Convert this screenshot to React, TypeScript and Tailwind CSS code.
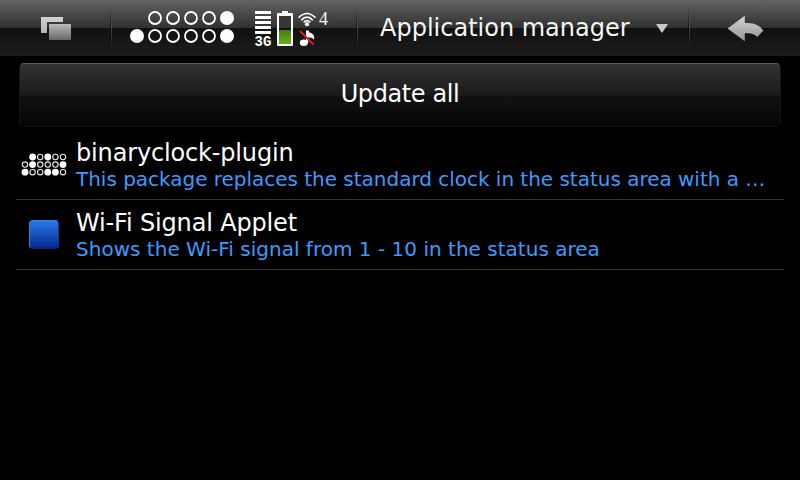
import React from "react";

function TaskSwitcher() {
  return (
    <svg className="block" width="110" height="56" viewBox="0 0 110 56">
      <defs>
        <linearGradient id="back" x1="0" y1="0" x2="0" y2="1">
          <stop offset="0" stopColor="#d2d2d2" />
          <stop offset="1" stopColor="#b4b4b4" />
        </linearGradient>
        <linearGradient id="front" x1="0" y1="0" x2="0" y2="1">
          <stop offset="0" stopColor="#bcbcbc" />
          <stop offset="1" stopColor="#666666" />
        </linearGradient>
      </defs>
      <path d="M41 17H63V22H47V33H41Z" fill="url(#back)" />
      <rect x="49" y="24" width="22" height="16" rx="0.5" fill="url(#front)" />
    </svg>
  );
}

function Bit({ x, y, on }: { x: number; y: number; on: boolean }) {
  return <circle cx={x} cy={y} r={on ? 7 : 6} fill={on ? "#fcfffc" : "none"} stroke="#fcfffc" strokeWidth={on ? 0 : 1.8} />;
}

function BinaryClock() {
  return (
    <svg className="block" width="118" height="56" viewBox="127 0 118 56">
      {[155, 173, 191, 209, 227].map((x, i) => (
        <Bit key={x} x={x} y={18} on={i === 4} />
      ))}
      {[137, 155, 173, 191, 209, 227].map((x, i) => (
        <Bit key={x} x={x} y={36} on={i === 0 || i === 5} />
      ))}
    </svg>
  );
}

function StatusIcons() {
  return (
    <svg className="block" width="90" height="56" viewBox="245 0 90 56">
      <defs>
        <linearGradient id="charge" x1="0" y1="0" x2="0" y2="1">
          <stop offset="0" stopColor="#437c14" />
          <stop offset="1" stopColor="#68b020" />
        </linearGradient>
      </defs>
      {[11, 16, 21, 26, 31].map((y) => (
        <rect key={y} x="255" y={y} width="16" height="3" fill="#fcfffc" />
      ))}
      <text y="46" fill="#fcfffc" fontFamily="Liberation Mono, monospace" fontWeight="700" fontSize="14">
        <tspan x="254.5">3</tspan>
        <tspan x="263">G</tspan>
      </text>
      <path d="M282 13V11H288V13H292Q293 13 293 14V45Q293 46 292 46H278Q277 46 277 45V14Q277 13 278 13Z" fill="#fcfffc" />
      <rect x="279" y="16" width="12" height="12" fill="#363636" />
      <rect x="279" y="28" width="12" height="2" fill="#111" />
      <rect x="279" y="30" width="12" height="14" fill="url(#charge)" />
      <g fill="none" stroke="#fcfffc" strokeWidth="1.6">
        <path d="M298.5 17.8Q307 9.2 315.5 17.8" />
        <path d="M301.2 20.2Q307 14 312.8 20.2" />
        <path d="M303.7 22.4Q307 18.9 310.3 22.4" />
      </g>
      <circle cx="307" cy="24.2" r="2.1" fill="#fcfffc" />
      <text x="319" y="25" fill="#fcfffc" fontFamily="Liberation Serif, serif" fontSize="18">4</text>
      <ellipse cx="303.8" cy="42.8" rx="4" ry="3.2" fill="#fcfffc" />
      <path d="M306 30.5H308.5Q309 33 311.5 33.2Q314.8 34.5 314 39.5Q312 37.2 308.2 37.2V43H306Z" fill="#fcfffc" />
      <path d="M300 31L313.5 44.5" stroke="#df2025" strokeWidth="1.8" />
    </svg>
  );
}

function BackArrow() {
  return (
    <svg className="block" width="110" height="56" viewBox="690 0 110 56">
      <defs>
        <linearGradient id="arrow" x1="0" y1="0" x2="0" y2="1">
          <stop offset="0" stopColor="#d6d6d6" />
          <stop offset="1" stopColor="#929292" />
        </linearGradient>
      </defs>
      <path d="M727.5 28.5L744.8 15.8V23H748Q758.5 23 763.3 30.5L757.3 37Q753.5 33.3 748 33.3H744.8V41.2Z" fill="url(#arrow)" />
    </svg>
  );
}

function ClockPluginIcon() {
  const rows = [
    { y: 5, first: 1, bits: [1, 0, 1, 0, 0] },
    { y: 12.6, first: 0, bits: [0, 1, 0, 0, 0, 1] },
    { y: 20.2, first: 0, bits: [1, 0, 0, 1, 1, 0] },
  ];
  return (
    <svg width="48" height="27" viewBox="0 0 48 27">
      {rows.map((row) =>
        row.bits.map((on, i) => (
          <circle key={`${row.y}-${i}`} cx={5 + (i + row.first) * 7.6} cy={row.y} r={on ? 3.4 : 2.7} fill={on ? "#fff" : "none"} stroke="#e4e4e4" strokeWidth={on ? 0 : 1.1} />
        ))
      )}
    </svg>
  );
}

function AppletIcon() {
  return <div className="mb-[2px] h-[29px] w-[30px] rounded-[4px] border border-t-[#3b7cdb] border-r-[#12368c] border-b-[#0c2468] border-l-[#4a78c8] bg-linear-to-b from-[#2b78ee] to-[#07298c]" />;
}

function Divider() {
  return (
    <div className="flex h-10 w-[2px]">
      <div className="w-px bg-linear-to-b from-transparent via-black/60 to-transparent" />
      <div className="w-px bg-linear-to-b from-transparent via-[#555555]/80 to-transparent" />
    </div>
  );
}

type PackageRowProps = { icon: React.ReactNode; name: string; summary: string; summaryTracking: string };

function PackageRow({ icon, name, summary, summaryTracking }: PackageRowProps) {
  return (
    <li className="flex h-[70px] border-b border-[#353535]">
      <div className="flex w-[60px] items-center justify-center pt-px pr-1">{icon}</div>
      <div className="flex flex-col pt-[9px] whitespace-nowrap">
        <span className="text-[24px] leading-[28px] tracking-[-0.16px] text-white">{name}</span>
        <span className={`text-[20px] leading-[24px] text-[#3a9cff] ${summaryTracking}`}>{summary}</span>
      </div>
    </li>
  );
}

export default function App() {
  return (
    <div className="flex h-[480px] w-[800px] flex-col overflow-hidden bg-black font-['DejaVu_Sans',sans-serif]">
      <header className="flex h-14 items-center bg-[linear-gradient(#626262_0px,#303030_28px,#111111_28px,#1c1c1c_56px)]">
        <TaskSwitcher />
        <Divider />
        <div className="flex w-[244px] pl-[15px]">
          <BinaryClock />
          <StatusIcons />
        </div>
        <Divider />
        <div className="flex w-[330px] items-center justify-between pr-[20px] pl-[22px]">
          <h1 className="text-[24px] leading-7 whitespace-nowrap text-[#f4f8f4]">Application manager</h1>
          <svg width="12" height="9" viewBox="0 0 12 9">
            <path d="M0 0H12L6 9Z" fill="#c8c8c8" />
          </svg>
        </div>
        <Divider />
        <BackArrow />
      </header>
      <main className="px-4 pt-[7px]">
        <button className="mx-[3px] block h-16 w-[762px] rounded-[5px] border border-t-[#5a5a5a] border-r-[#171717] border-b-[#141414] border-l-[#171717] bg-[linear-gradient(#333333,#1a1a1a_50%,#121212_52%,#050505)] pb-[3px] text-[24px] tracking-[-0.4px] text-white">
          Update all
        </button>
        <ul className="pt-[3px]">
          <PackageRow icon={<ClockPluginIcon />} name="binaryclock-plugin" summary="This package replaces the standard clock in the status area with a …" summaryTracking="tracking-[-0.02px]" />
          <PackageRow icon={<AppletIcon />} name="Wi-Fi Signal Applet" summary="Shows the Wi-Fi signal from 1 - 10 in the status area" summaryTracking="tracking-[0.015px]" />
        </ul>
      </main>
    </div>
  );
}
